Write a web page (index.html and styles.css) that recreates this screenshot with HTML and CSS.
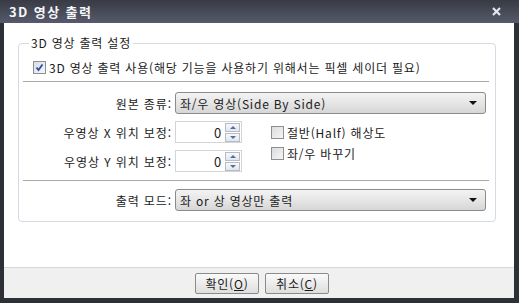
FILE: index.html
```html
<!DOCTYPE html>
<html lang="ko">
<head>
    <meta charset="UTF-8">
    <title>3D 영상 출력</title>
    <link rel="stylesheet" href="styles.css">
</head>
<body>
    <div class="window">
        <div class="titlebar">
            <span class="title">3D 영상 출력</span>
            <svg class="close" width="9" height="9" viewBox="0 0 9 9">
                <path d="M1 1 L8 8 M8 1 L1 8" stroke="#e4e6ec" stroke-width="2.2"/>
            </svg>
        </div>
        <div class="content">
            <fieldset class="group">
                <legend>3D 영상 출력 설정</legend>
                <label class="check main">
                    <span class="box checked">
                        <svg width="9" height="9" viewBox="0 0 9 9"><path d="M1.5 4.5 L3.5 7 L7.5 1.5" fill="none" stroke="#2d4f9e" stroke-width="1.8"/></svg>
                    </span>
                    3D 영상 출력 사용(해당 기능을 사용하기 위해서는 픽셀 세이더 필요)
                </label>
                <div class="sep"></div>
                <div class="row">
                    <span class="lbl">원본 종류:</span>
                    <div class="select"><span>좌/우 영상(Side By Side)</span><i class="arrow"></i></div>
                </div>
                <div class="row">
                    <span class="lbl">우영상 X 위치 보정:</span>
                    <div class="spin">
                        <span class="val">0</span>
                        <div class="btns"><b class="up"></b><b class="down"></b></div>
                    </div>
                    <label class="check side"><span class="box"></span>절반(Half) 해상도</label>
                </div>
                <div class="row">
                    <span class="lbl">우영상 Y 위치 보정:</span>
                    <div class="spin">
                        <span class="val">0</span>
                        <div class="btns"><b class="up"></b><b class="down"></b></div>
                    </div>
                    <label class="check side up-shift"><span class="box"></span>좌/우 바꾸기</label>
                </div>
                <div class="sep low"></div>
                <div class="row">
                    <span class="lbl">출력 모드:</span>
                    <div class="select"><span>좌 or 상 영상만 출력</span><i class="arrow"></i></div>
                </div>
            </fieldset>
        </div>
        <div class="footer">
            <button>확인(<u>O</u>)</button>
            <button>취소(<u>C</u>)</button>
        </div>
    </div>
</body>
</html>
```

FILE: styles.css
```css
body{
    margin: 0;
    padding: 0;
    font-family: "Noto Sans CJK KR", "Liberation Sans", sans-serif;
    font-size: 12px;
    letter-spacing: 0.8px;
    color: #1b1b1b;
    background: #2e3038;
}
.window{
    width: 519px;
    height: 303px;
    background: #2e3038;
    display: flex;
    flex-direction: column;
}
.titlebar{
    height: 23px;
    flex: none;
    display: flex;
    align-items: center;
    justify-content: space-between;
    padding: 0 18px 0 9px;
    background: linear-gradient(#383a44, #565a6b);
}
.title{
    color: #f4f5f8;
    font-weight: bold;
    font-size: 13px;
    letter-spacing: 1.4px;
    line-height: 14px;
}
.content{
    flex: 1;
    margin: 0 5px 0 4px;
    background: #fff;
    padding: 13px 0 0 14px;
}
.group{
    width: 478px;
    box-sizing: border-box;
    margin: 0;
    padding: 7px 6px 10px 4px;
    border: 1px solid #d3dbe2;
    border-radius: 4px;
}
.group legend{
    padding: 0 2px;
    margin-left: 6px;
    line-height: 14px;
    height: 14px;
}
.check{
    display: flex;
    align-items: center;
    gap: 3px;
    height: 20px;
}
.check.main{
    padding-left: 10px;
}
.box{
    width: 11px;
    height: 11px;
    border: 1px solid #8e8f8f;
    background: linear-gradient(135deg, #dcdcdc, #f6f6f6);
    display: flex;
    align-items: center;
    justify-content: center;
    flex: none;
}
.box.checked{
    background: linear-gradient(135deg, #d8dde6, #f4f6f9);
}
.sep{
    height: 1px;
    background: #a9a9a9;
    margin: 4px 0 10px;
}
.sep.low{
    margin: 8px 0 8px;
}
.row{
    display: flex;
    align-items: center;
    height: 22px;
    margin-bottom: 7px;
}
.row:last-child{
    margin-bottom: 0;
}
.lbl{
    width: 149px;
    text-align: right;
    margin-right: 3px;
    flex: none;
    letter-spacing: 0.9px;
}
.select{
    width: 311px;
    height: 22px;
    box-sizing: border-box;
    border: 1px solid #8b8b8b;
    border-radius: 3px;
    background: linear-gradient(#f3f3f3, #e6e6e6 50%, #d6d6d6);
    display: flex;
    align-items: center;
    justify-content: space-between;
    padding: 0 8px 0 4px;
}
.arrow{
    width: 0;
    height: 0;
    border-left: 4px solid transparent;
    border-right: 4px solid transparent;
    border-top: 4px solid #111;
}
.spin{
    width: 67px;
    height: 22px;
    box-sizing: border-box;
    border: 1px solid #cfd5db;
    display: flex;
    align-items: center;
    justify-content: flex-end;
    gap: 3px;
    padding-right: 1px;
}
.val{
    font-size: 13px;
}
.btns{
    display: flex;
    flex-direction: column;
    gap: 1px;
}
.btns b{
    width: 15px;
    height: 9px;
    border: 1px solid #b8bcc2;
    background: linear-gradient(#f7f8fa, #e3e6ea);
    display: flex;
    align-items: center;
    justify-content: center;
    box-sizing: border-box;
}
.btns b::after{
    content: "";
    border-left: 3px solid transparent;
    border-right: 3px solid transparent;
}
.btns .up::after{
    border-bottom: 3px solid #4e6fae;
}
.btns .down::after{
    border-top: 3px solid #4e6fae;
}
.check.side{
    margin-left: 29px;
}
.check.side.up-shift{
    margin-top: -15px;
}
.footer{
    height: 30px;
    flex: none;
    margin: 0 5px 5px 4px;
    background: #f0f0f0;
    border-top: 1px solid #d8d8d8;
    display: flex;
    justify-content: center;
    align-items: center;
    gap: 6px;
    padding-left: 6px;
}
button{
    width: 64px;
    height: 21px;
    border: 1px solid #8a8a8a;
    border-radius: 2px;
    background: linear-gradient(#fafafa, #ececec 50%, #dedede);
    font-family: inherit;
    font-size: 12px;
    letter-spacing: 0.8px;
    color: #1b1b1b;
    padding: 0;
}
```
